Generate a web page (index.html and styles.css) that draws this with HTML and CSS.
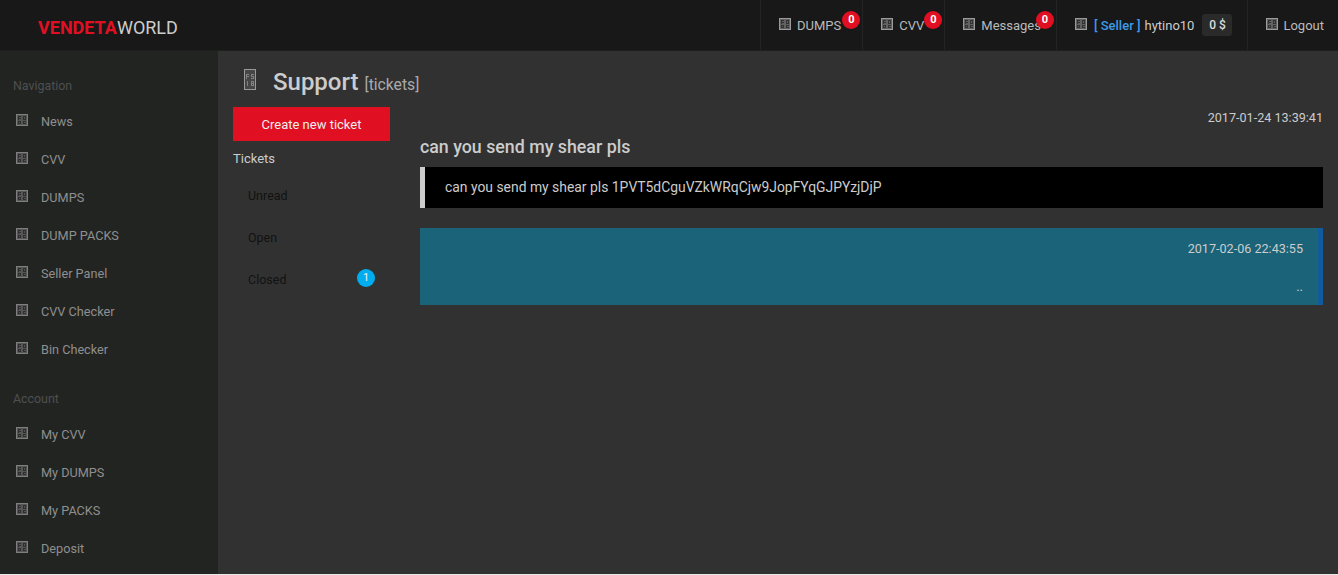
FILE: index.html
```html
<!DOCTYPE html>
<html lang="en">
<head>
<meta charset="utf-8">
<title>Support</title>
<link rel="stylesheet" href="styles.css">
</head>
<body>
<svg class="defs" width="0" height="0" aria-hidden="true">
  <symbol id="hex" viewBox="0 0 12 12">
    <path d="M0 0h12v12H0zM1 1v10h10V1z" fill="currentColor" opacity=".9"/>
    <path d="M1 1h10v10H1z" fill="currentColor" opacity=".5"/>
    <path d="M2 2h3v1H3v1h2v1H3v1H2zM7 2h3v4H7zM8 3v2h1V3zM2 7h3v3H2zM3 8v1h1V8zM7 7h3v1H8v1h2v1H7z" fill="#222" opacity=".75"/>
  </symbol>
  <symbol id="hex-tall" viewBox="0 0 12 21">
    <path d="M0 0h12v21H0zM1 1v19h10V1z" fill="currentColor"/>
    <path d="M1 1h10v19H1z" fill="currentColor" opacity=".2"/>
    <path d="M2 5h3v1H3v1h2v1H3v2H2zM7 5h3v1H8v1h2v3H7V9h2V8H7zM3 12h1v5H3zM7 12h3v5H7zM8 13v1h1v-1zM8 15v1h1v-1z" fill="currentColor" opacity=".7"/>
  </symbol>
</svg>
<div class="app">
  <header class="topbar">
    <a class="logo"><b>VENDETA</b>WORLD</a>
    <nav class="topnav">
      <a class="topitem"><svg class="ico"><use href="#hex"/></svg>DUMPS<span class="count">0</span></a>
      <a class="topitem cvv"><svg class="ico"><use href="#hex"/></svg>CVV<span class="count">0</span></a>
      <a class="topitem tight"><svg class="ico"><use href="#hex"/></svg>Messages<span class="count">0</span></a>
      <a class="topitem tight"><svg class="ico"><use href="#hex"/></svg><span class="seller">[ Seller ]</span><span class="user">hytino10</span><span class="balance">0 $</span></a>
      <a class="topitem logout"><svg class="ico"><use href="#hex"/></svg>Logout</a>
    </nav>
  </header>
  <div class="body">
    <aside class="sidebar">
      <h4 class="side-title">Navigation</h4>
      <ul class="side-list">
        <li><svg class="ico"><use href="#hex"/></svg>News</li>
        <li><svg class="ico"><use href="#hex"/></svg>CVV</li>
        <li><svg class="ico"><use href="#hex"/></svg>DUMPS</li>
        <li><svg class="ico"><use href="#hex"/></svg>DUMP PACKS</li>
        <li><svg class="ico"><use href="#hex"/></svg>Seller Panel</li>
        <li><svg class="ico"><use href="#hex"/></svg>CVV Checker</li>
        <li><svg class="ico"><use href="#hex"/></svg>Bin Checker</li>
      </ul>
      <h4 class="side-title second">Account</h4>
      <ul class="side-list">
        <li><svg class="ico"><use href="#hex"/></svg>My CVV</li>
        <li><svg class="ico"><use href="#hex"/></svg>My DUMPS</li>
        <li><svg class="ico"><use href="#hex"/></svg>My PACKS</li>
        <li><svg class="ico"><use href="#hex"/></svg>Deposit</li>
      </ul>
    </aside>
    <main class="main">
      <div class="page-head">
        <svg class="ico-tall"><use href="#hex-tall"/></svg>
        <h1 class="page-title">Support <small>[tickets]</small></h1>
      </div>
      <div class="columns">
        <section class="tickets-col">
          <a class="create-btn">Create new ticket</a>
          <div class="tickets-label">Tickets</div>
          <ul class="tickets-list">
            <li>Unread</li>
            <li>Open</li>
            <li>Closed<span class="closed-count">1</span></li>
          </ul>
        </section>
        <section class="thread">
          <div class="thread-date">2017-01-24 13:39:41</div>
          <h3 class="thread-title">can you send my shear pls</h3>
          <blockquote class="quote">can you send my shear pls 1PVT5dCguVZkWRqCjw9JopFYqGJPYzjDjP</blockquote>
          <div class="reply">
            <div class="reply-date">2017-02-06 22:43:55</div>
            <div class="reply-text">..</div>
          </div>
        </section>
      </div>
    </main>
  </div>
</div>
</body>
</html>
```

FILE: styles.css
```css
* { box-sizing: border-box; }
html, body { margin: 0; height: 575px; overflow: hidden; }
body { background: #e8e8e8; font-family: Roboto, "Liberation Sans", sans-serif; font-size: 13px; color: #ccc; }
.defs { position: absolute; }
ul { list-style: none; margin: 0; padding: 0; }
.app { height: 574px; display: flex; flex-direction: column; overflow: hidden; }

.topbar { height: 51px; flex: none; background: #181818; border-bottom: 1px solid #1f1f1f; display: flex; justify-content: space-between; }
.logo { margin-left: 38px; font-size: 18px; line-height: 56px; color: #ccc; }
.logo b { color: #e01022; font-weight: 700; }
.topnav { display: flex; }
.topitem { position: relative; display: flex; align-items: center; height: 50px; padding: 0 21px 0 18px; border-left: 1px solid #242424; color: #bbb; font-size: 13px; }
.topitem.cvv { padding-right: 20px; }
.topitem.tight { padding-right: 15px; }
.topitem.logout { padding-right: 14px; }
.topitem.logout .ico { margin-right: 5px; }
.topitem .ico { color: #aaa; margin: -2px 6px 0 0; }
.count { position: absolute; top: 11px; right: 2px; width: 18px; height: 18px; border-radius: 50%; background: #e01022; color: #fff; font-size: 11px; font-weight: 700; line-height: 17px; text-align: center; }
.seller { color: #3d9be9; font-weight: 500; margin: 0 4px 0 1px; }
.user { color: #ccc; }
.balance { margin-left: 8px; width: 30px; height: 22px; line-height: 22px; text-align: center; border-radius: 3px; background: #2a2a2a; color: #ddd; font-weight: 500; font-size: 12px; }

.ico { width: 12px; height: 12px; flex: none; }
.body { flex: 1; display: flex; min-height: 0; }
.sidebar { width: 218px; flex: none; background: #222422; padding-top: 26px; }
.side-title { margin: 0 0 8px 13px; font-size: 12.4px; line-height: 17px; font-weight: 400; color: #4f4f4f; }
.side-title.second { margin: 22px 0 8px 13px; }
.side-list li { display: flex; align-items: center; height: 38px; padding-left: 16px; color: #8f8f8f; font-size: 12.7px; }
.side-list .ico { color: #888; margin: -2px 13px 0 0; }

.main { flex: 1; background: #313131; padding: 0 15px; min-width: 0; }
.page-head { display: flex; align-items: center; height: 56px; padding-left: 11px; }
.ico-tall { width: 12px; height: 21px; color: #999; margin: 0 17px 0 0; flex: none; }
.page-title { margin: 8px 0 0; font-size: 24px; font-weight: 500; color: #ccc; line-height: 60px; }
.page-title small { font-size: 15.7px; font-weight: 400; color: #aaa; }
.columns { display: flex; gap: 30px; }
.tickets-col { width: 157px; flex: none; }
.create-btn { display: block; height: 34px; line-height: 35px; text-align: center; background: #e01022; color: #eee; font-size: 13px; }
.tickets-label { margin-top: 9px; line-height: 17px; color: #ccc; }
.tickets-list { margin-top: 8px; }
.tickets-list li { position: relative; height: 42px; line-height: 42px; padding-left: 15px; color: #111; font-size: 12.5px; }
.closed-count { position: absolute; right: 15px; top: 10px; width: 18px; height: 18px; border-radius: 50%; background: #00aeef; color: #eee; font-size: 11px; line-height: 18px; text-align: center; }
.thread { flex: 1; min-width: 0; }
.thread-date { padding-top: 1px; text-align: right; font-size: 12.6px; line-height: 20px; color: #ccc; }
.thread-title { margin: 9px 0 0; font-size: 17.8px; font-weight: 500; line-height: 20px; color: #ccc; }
.quote { margin: 10px 0 20px; height: 41px; line-height: 41px; padding-left: 20px; background: #000; border-left: 5px solid #ccc; color: #ccc; font-size: 13.9px; }
.reply { height: 77px; padding: 11px 15px 0 0; background: #1a6378; border-right: 5px solid #125a9e; text-align: right; }
.reply-date { font-size: 12.6px; line-height: 20px; color: #ccc; }
.reply-text { margin-top: 18px; line-height: 20px; color: #ccc; }
```
